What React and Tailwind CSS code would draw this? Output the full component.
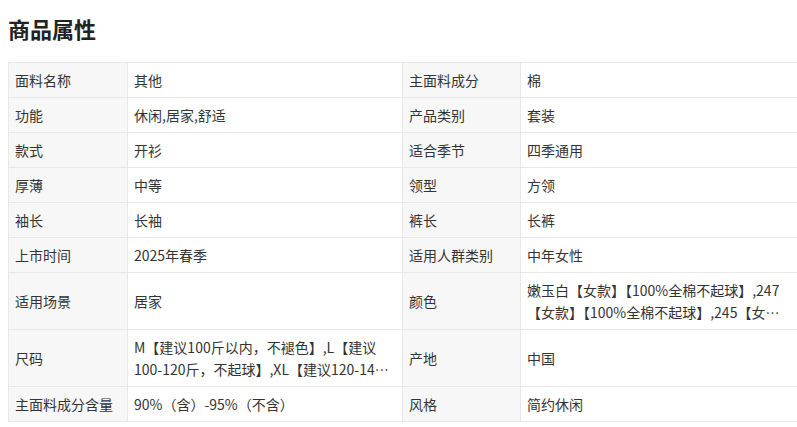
import React from "react";

const rows = [
  ["面料名称", "其他", "主面料成分", "棉"],
  ["功能", "休闲,居家,舒适", "产品类别", "套装"],
  ["款式", "开衫", "适合季节", "四季通用"],
  ["厚薄", "中等", "领型", "方领"],
  ["袖长", "长袖", "裤长", "长裤"],
  ["上市时间", "2025年春季", "适用人群类别", "中年女性"],
  ["适用场景", "居家", "颜色", "嫩玉白【女款】【100%全棉不起球】,247【女款】【100%全棉不起球】,245【女款】【100%全棉不起球】"],
  ["尺码", "M【建议100斤以内，不褪色】,L【建议100-120斤，不起球】,XL【建议120-140斤】", "产地", "中国"],
  ["主面料成分含量", "90%（含）-95%（不含）", "风格", "简约休闲"],
];

export default function App() {
  return (
    <div
      className="w-[797px] h-[427px] overflow-hidden bg-white text-[#333]"
      style={{ fontFamily: '"Noto Sans CJK SC", "Noto Sans", sans-serif' }}
    >
      <div className="pl-2 pt-[13px]">
        <div className="text-[22px] leading-[30px] font-bold text-[#222] mb-[19px]">商品属性</div>
        <table className="table-fixed border-collapse w-[790px] text-[14px]">
          <colgroup>
            <col className="w-[119px]" />
            <col className="w-[275px]" />
            <col className="w-[118px]" />
            <col className="w-[278px]" />
          </colgroup>
          <tbody>
            {rows.map((r, i) => (
              <tr key={i}>
                <td className="border border-[#e8e8e8] bg-[#f7f7f7] px-[6px] py-[6px] leading-[22px] align-middle whitespace-nowrap">{r[0]}</td>
                <td className="border border-[#e8e8e8] px-[6px] py-[6px] leading-[22px] align-middle">
                  <div className="line-clamp-2">{r[1]}</div>
                </td>
                <td className="border border-[#e8e8e8] bg-[#f7f7f7] px-[6px] py-[6px] leading-[22px] align-middle whitespace-nowrap">{r[2]}</td>
                <td className="border border-[#e8e8e8] px-[6px] py-[6px] leading-[22px] align-middle">
                  <div className="line-clamp-2">{r[3]}</div>
                </td>
              </tr>
            ))}
          </tbody>
        </table>
      </div>
    </div>
  );
}
